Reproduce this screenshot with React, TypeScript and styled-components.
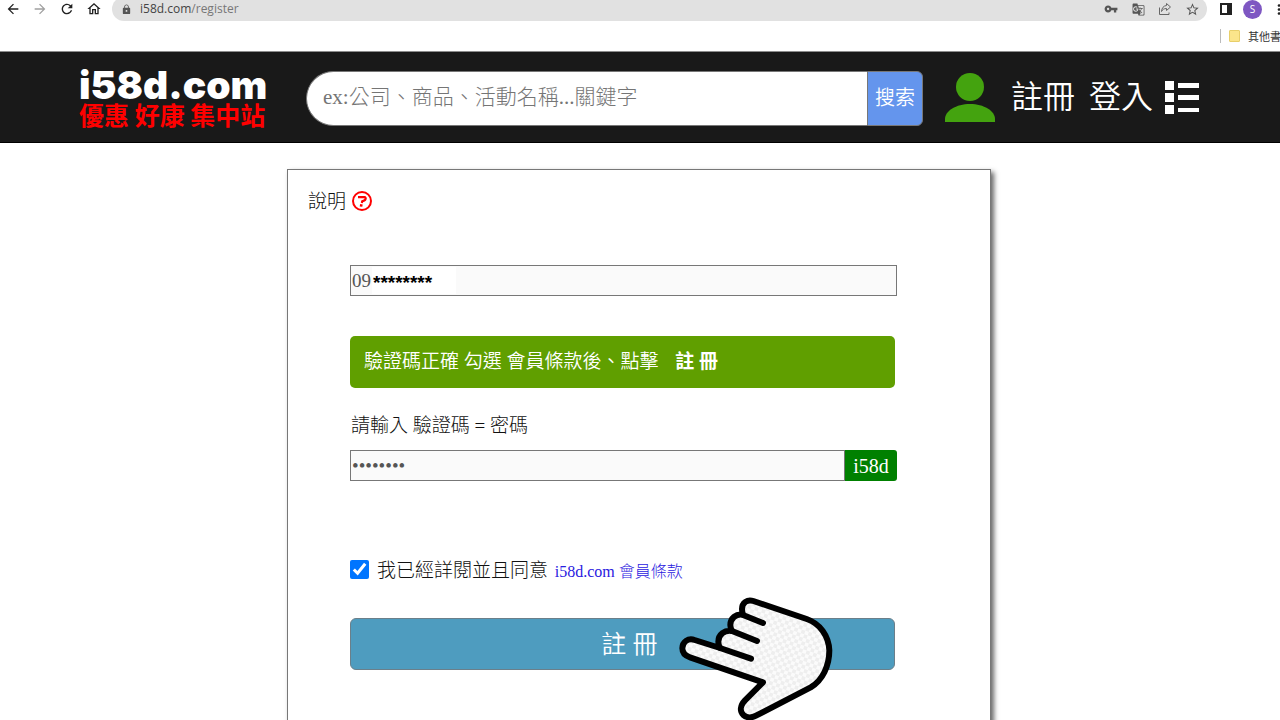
import React from "react";
import styled, { createGlobalStyle } from "styled-components";
import {
  MdArrowBack,
  MdArrowForward,
  MdRefresh,
  MdOutlineHome,
  MdLock,
  MdVpnKey,
  MdGTranslate,
  MdStarBorder,
  MdMoreVert,
} from "react-icons/md";

const GlobalStyle = createGlobalStyle`
  * { box-sizing: border-box; }
  body {
    margin: 0;
    background: #fff;
    color: #111;
    font-family: "Liberation Serif", "Noto Sans CJK TC", serif;
    font-weight: 300;
  }
  button, input { font: inherit; margin: 0; }
`;

const Page = styled.div`
  height: 100vh;
  overflow: hidden;
  display: flex;
  flex-direction: column;
`;

/* Browser chrome */
const Chrome = styled.div`
  flex: none;
  height: 52px;
  overflow: hidden;
  border-bottom: 1px solid #8c8c8c;
  font-family: "Open Sans", "Noto Sans CJK TC", sans-serif;
  font-weight: 400;
`;

const Toolbar = styled.div`
  display: flex;
  align-items: center;
  height: 24px;
  margin: -3px -7px 0 0;
  padding-left: 5px;
`;

const ToolButton = styled.button<{ $muted?: boolean; $color?: string }>`
  display: flex;
  align-items: center;
  justify-content: center;
  flex: none;
  width: 16px;
  height: 16px;
  padding: 0;
  border: 0;
  background: none;
  color: ${(p) => (p.$muted ? "#a0a0a0" : p.$color || "#222")};
`;

const ToolGroup = styled.div<{ $gap: number }>`
  display: flex;
  align-items: center;
  gap: ${(p) => p.$gap}px;
`;

const Omnibox = styled.div`
  flex: 1;
  display: flex;
  align-items: center;
  height: 24px;
  margin: 0 11px 0 10px;
  padding: 0 7px 0 9px;
  border-radius: 12px;
  background: #e1e1e1;
  color: #555;
`;

const Address = styled.span`
  flex: 1;
  margin-left: 8px;
  font-size: 12px;
  line-height: 16px;
  color: #777;
  b {
    font-weight: 400;
    color: #444;
  }
`;

const Avatar = styled.button`
  width: 19px;
  height: 19px;
  padding: 0;
  border: 0;
  border-radius: 50%;
  background: #7e57c2;
  color: #fff;
  font-size: 10px;
  line-height: 19px;
`;

const Bookmarks = styled.div`
  display: flex;
  align-items: center;
  justify-content: flex-end;
  gap: 8px;
  height: 30px;
  margin-right: -12px;
  font-size: 11px;
  white-space: nowrap;
  color: #333;
`;

const Divider = styled.span`
  width: 1px;
  height: 14px;
  background: #bbb;
`;

const Folder = styled.span`
  width: 11px;
  height: 12px;
  border: 1px solid #e8cf6a;
  border-radius: 1px;
  background: #fbe58b;
`;

/* Site header */
const Header = styled.header`
  flex: none;
  display: flex;
  align-items: center;
  height: 91px;
  padding: 2px 81px 0 79px;
  background: #191919;
  border-bottom: 1px solid #000;
`;

const Logo = styled.a`
  flex: none;
  width: 191px;
  text-decoration: none;
  white-space: nowrap;
`;

const LogoName = styled.div`
  font: 900 39px/31px "Inter", sans-serif;
  color: #fff;
`;

const LogoTag = styled.div`
  font: 700 25px/28px "Noto Sans CJK TC", sans-serif;
  color: #f00;
`;

const Search = styled.form`
  flex: 1;
  display: flex;
  height: 55px;
  margin: 0 22px 0 36px;
`;

const SearchInput = styled.input`
  flex: 1;
  min-width: 0;
  padding: 0 0 2px 16px;
  border: 1px solid #777;
  border-right: 0;
  border-radius: 28px 0 0 28px;
  background: #fff;
  font-size: 21px;
  outline: 0;
  &::placeholder {
    color: #757575;
  }
`;

const SearchButton = styled.button`
  width: 56px;
  padding: 0 0 3px;
  border: 1px solid #777;
  border-radius: 0 6px 6px 0;
  background: #6495ed;
  color: #fff;
  font-size: 20px;
  font-weight: 350;
`;

const Nav = styled.nav`
  display: flex;
  align-items: center;
  gap: 14px;
  margin: 0 12px 0 16px;
`;

const NavLink = styled.a`
  color: #fff;
  font-size: 32px;
  font-weight: 350;
  line-height: 40px;
  padding-bottom: 2px;
  text-decoration: none;
`;

const MenuButton = styled.button`
  display: flex;
  padding: 0;
  border: 0;
  background: none;
`;

/* Registration card */
const Main = styled.main`
  flex: none;
  padding: 26px 10px 0 8px;
`;

const Card = styled.section`
  max-width: 704px;
  margin: 0 auto;
  padding: 18px 0 80px;
  border: 1px solid #777;
  background: #fff;
  box-shadow: 3px 3px 5px #666;
`;

const CardTitle = styled.h1`
  display: flex;
  align-items: center;
  gap: 6px;
  margin: 0 0 49px 20px;
  font-size: 19px;
  font-weight: 300;
  line-height: 28px;
  svg {
    margin-bottom: 3px;
  }
`;

const Form = styled.form`
  display: flex;
  flex-direction: column;
  padding: 0 93px 0 62px;
`;

const Field = styled.div`
  position: relative;
  display: flex;
  height: 31px;
`;

const TextInput = styled.input`
  flex: 1;
  min-width: 0;
  padding: 0 1px;
  border: 1px solid #777;
  border-radius: 0;
  background: #fafafa;
  color: #555;
  font-size: 19px;
  outline: 0;
`;

const Mask = styled.span`
  position: absolute;
  left: 22px;
  top: 2px;
  width: 84px;
  height: 27px;
  padding-left: 1px;
  background: #fff;
  color: #000;
  font: 700 19px/31px "Liberation Sans", sans-serif;
`;

const Brand = styled.span`
  width: 52px;
  border-radius: 0 3px 3px 0;
  background: #008000;
  color: #fff;
  font-size: 20px;
  line-height: 32px;
  text-align: center;
`;

const Notice = styled.p`
  margin: 40px 2px 24px 0;
  padding: 12px 14px;
  border-radius: 5px;
  background: #609f00;
  color: #fff;
  font-size: 19px;
  font-weight: 350;
  line-height: 28px;
  strong {
    margin-left: 12px;
    font-weight: 700;
  }
`;

const Label = styled.label`
  margin-bottom: 10px;
  padding-left: 1px;
  font-size: 19px;
  line-height: 28px;
`;

const Terms = styled.div`
  display: flex;
  align-items: center;
  gap: 8px;
  margin: 74px 0 34px;
  font-size: 19px;
  line-height: 28px;
  input {
    width: 19px;
    height: 19px;
  }
  span {
    margin: 2px 0 -2px;
  }
  a {
    margin-left: 2px;
    font-size: 16px;
    color: #2a20e0;
    text-decoration: none;
  }
`;

const SubmitRow = styled.div`
  position: relative;
  margin-right: 2px;
`;

const Submit = styled.button`
  display: block;
  width: 100%;
  height: 52px;
  padding: 0 0 4px 14px;
  border: 1px solid #6b7f8a;
  border-radius: 6px;
  background: #4e9cbf;
  color: #fff;
  font-size: 25px;
  font-weight: 350;
`;

const Pointer = styled.svg`
  position: absolute;
  left: 328px;
  top: -23px;
  pointer-events: none;
`;

const PointingHand = () => (
  <Pointer width="160" height="128" viewBox="54 46 480 384" aria-hidden="true">
    <defs>
      <pattern id="checks" width="22" height="22" patternUnits="userSpaceOnUse" patternTransform="rotate(18)">
        <rect width="22" height="22" fill="#fbfbfb" />
        <rect width="11" height="11" fill="#eeeeee" />
        <rect x="11" y="11" width="11" height="11" fill="#eeeeee" />
      </pattern>
    </defs>
    <g stroke="#000" strokeWidth="18" strokeLinecap="round" strokeLinejoin="round">
      <path
        fill="url(#checks)"
        d="M180 205 L104 181 C84 174 67 187 67 206 C67 220 77 229 90 233 L309 308 L255 362 C240 378 239 395 250 406 C260 415 275 415 288 408 L452 323 C488 302 508 258 508 212 C506 168 480 132 440 118 L280 64 C262 58 246 69 246 88 C246 95 247 100 249 105 C228 101 211 116 211 136 C211 143 213 149 216 154 C194 150 175 165 175 186 C175 194 177 200 180 205 Z"
      />
      <path fill="none" d="M249 106 L309 130 M216 154 L291 184 M180 205 L273 237" />
    </g>
  </Pointer>
);

export default function App() {
  return (
    <>
      <GlobalStyle />
      <Page>
        <Chrome>
          <Toolbar>
            <ToolGroup $gap={11}>
              <ToolButton aria-label="Back"><MdArrowBack size={16} /></ToolButton>
              <ToolButton aria-label="Forward" $muted><MdArrowForward size={16} /></ToolButton>
              <ToolButton aria-label="Reload"><MdRefresh size={18} /></ToolButton>
              <ToolButton aria-label="Home"><MdOutlineHome size={18} /></ToolButton>
            </ToolGroup>
            <Omnibox>
              <MdLock size={11} />
              <Address><b>i58d.com</b>/register</Address>
              <ToolGroup $gap={11}>
                <ToolButton aria-label="Passwords" $color="#555"><MdVpnKey size={14} /></ToolButton>
                <ToolButton aria-label="Translate" $color="#555"><MdGTranslate size={13} /></ToolButton>
                <ToolButton aria-label="Share" $color="#666">
                  <svg width="14" height="14" viewBox="0 0 14 14" fill="none" stroke="currentColor" strokeLinejoin="round">
                    <path d="M1.500 5.500V12.500H11V10.500" />
                    <path d="M8.500 1.500L12.500 5L8.500 8.500V6.500C6 6.500 4.500 7.500 3.500 9.500C3.800 6 5.500 3.800 8.500 3.500Z" />
                  </svg>
                </ToolButton>
                <ToolButton aria-label="Bookmark" $color="#555"><MdStarBorder size={15} /></ToolButton>
              </ToolGroup>
            </Omnibox>
            <ToolGroup $gap={9}>
              <ToolButton aria-label="Side panel">
                <svg width="12" height="12" viewBox="0 0 12 12">
                  <path d="M1 1H11V11H1Z" fill="none" stroke="#222" strokeWidth="2" />
                  <path d="M7 1H11V11H7Z" fill="#222" />
                </svg>
              </ToolButton>
              <Avatar aria-label="Profile">S</Avatar>
              <ToolButton aria-label="Menu"><MdMoreVert size={17} /></ToolButton>
            </ToolGroup>
          </Toolbar>
          <Bookmarks>
            <Divider />
            <Folder />
            <span>其他書籤</span>
          </Bookmarks>
        </Chrome>

        <Header>
          <Logo href="#">
            <LogoName>i58d.com</LogoName>
            <LogoTag>優惠 好康 集中站</LogoTag>
          </Logo>
          <Search>
            <SearchInput type="text" aria-label="搜索" placeholder="ex:公司、商品、活動名稱...關鍵字" />
            <SearchButton type="button">搜索</SearchButton>
          </Search>
          <svg width="50" height="50" viewBox="0 0 50 50" fill="#44a30f" aria-hidden="true">
            <circle cx="25" cy="14" r="14" />
            <path d="M0 49V46C0 38 11 31 25 31S50 38 50 46V49Z" />
          </svg>
          <Nav>
            <NavLink href="#">註冊</NavLink>
            <NavLink href="#">登入</NavLink>
          </Nav>
          <MenuButton aria-label="選單">
            <svg width="34" height="34" viewBox="0 0 34 34" fill="#fff">
              <path d="M0 0H9V9H0ZM0 12H9V21H0ZM0 24H9V33H0ZM13 2H34V7H13ZM13 14H34V19H13ZM13 27H34V31H13Z" />
            </svg>
          </MenuButton>
        </Header>

        <Main>
          <Card>
            <CardTitle>
              說明
              <svg width="20" height="20" viewBox="0 0 20 20" fill="none" stroke="#f00" aria-hidden="true">
                <circle cx="10" cy="10" r="9" strokeWidth="2" />
                <path d="M6 6.200H12.500C14.500 6.500 13.800 9 12 9.600L10.200 10.300L9.900 12" strokeWidth="2.200" />
                <path d="M9.400 13.200L9 15.600" strokeWidth="2.600" />
              </svg>
            </CardTitle>
            <Form>
              <Field>
                <TextInput type="text" aria-label="手機號碼" defaultValue="09" />
                <Mask>********</Mask>
              </Field>
              <Notice>
                驗證碼正確 勾選 會員條款後、點擊 <strong>註 冊</strong>
              </Notice>
              <Label htmlFor="code">請輸入 驗證碼 = 密碼</Label>
              <Field>
                <TextInput id="code" type="password" defaultValue="12345678" />
                <Brand>i58d</Brand>
              </Field>
              <Terms>
                <input id="agree" type="checkbox" defaultChecked />
                <span>
                  <label htmlFor="agree">我已經詳閱並且同意</label> <a href="#">i58d.com 會員條款</a>
                </span>
              </Terms>
              <SubmitRow>
                <Submit type="button">註 冊</Submit>
                <PointingHand />
              </SubmitRow>
            </Form>
          </Card>
        </Main>
      </Page>
    </>
  );
}
